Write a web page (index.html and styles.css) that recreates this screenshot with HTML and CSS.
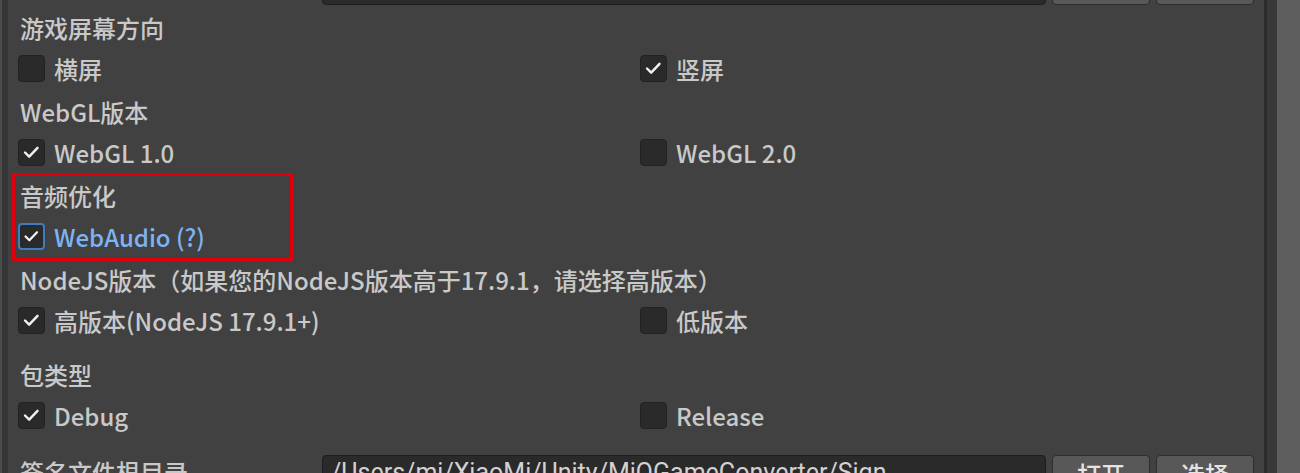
FILE: index.html
```html
<!DOCTYPE html>
<html lang="zh">
<head>
    <meta charset="UTF-8">
    <title>MiQGameConverter</title>
    <link rel="stylesheet" href="styles.css">
</head>
<body>

<div class="edge-left"></div>

<div class="panel">
    <!-- fila anterior, casi fuera de la vista -->
    <div class="field-row prev-row">
        <div class="field-label"></div>
        <div class="path-input"></div>
        <div class="btn"></div>
        <div class="btn"></div>
    </div>

    <div class="section">
        <div class="heading">游戏屏幕方向</div>
        <div class="options">
            <label class="option"><span class="box"></span>横屏</label>
            <label class="option"><span class="box checked"><svg viewBox="0 0 27 27"><polyline points="6.5,13.5 11,18 20,8.5"/></svg></span>竖屏</label>
        </div>
    </div>

    <div class="section">
        <div class="heading">WebGL版本</div>
        <div class="options">
            <label class="option"><span class="box checked"><svg viewBox="0 0 27 27"><polyline points="6.5,13.5 11,18 20,8.5"/></svg></span>WebGL 1.0</label>
            <label class="option"><span class="box"></span>WebGL 2.0</label>
        </div>
    </div>

    <div class="section highlight">
        <div class="heading">音频优化</div>
        <div class="options">
            <label class="option focus"><span class="box checked"><svg viewBox="0 0 27 27"><polyline points="6.5,13.5 11,18 20,8.5"/></svg></span>WebAudio (?)</label>
        </div>
    </div>

    <div class="section">
        <div class="heading">NodeJS版本（如果您的NodeJS版本高于17.9.1，请选择高版本）</div>
        <div class="options">
            <label class="option"><span class="box checked"><svg viewBox="0 0 27 27"><polyline points="6.5,13.5 11,18 20,8.5"/></svg></span>高版本(NodeJS 17.9.1+)</label>
            <label class="option"><span class="box"></span>低版本</label>
        </div>
    </div>

    <div class="section spaced">
        <div class="heading">包类型</div>
        <div class="options">
            <label class="option"><span class="box checked"><svg viewBox="0 0 27 27"><polyline points="6.5,13.5 11,18 20,8.5"/></svg></span>Debug</label>
            <label class="option"><span class="box"></span>Release</label>
        </div>
    </div>

    <div class="field-row">
        <div class="field-label">签名文件根目录</div>
        <div class="path-input">/Users/mi/XiaoMi/Unity/MiQGameConverter/Sign</div>
        <div class="btn">打开</div>
        <div class="btn">选择</div>
    </div>
</div>

<div class="edge-right"></div>
<div class="scrollbar"></div>

</body>
</html>
```

FILE: styles.css
```css
body {
    margin: 0;
    padding: 0;
    height: 473px;
    overflow: hidden;
    display: flex;
    background-color: #414141;
    font-family: "Noto Sans CJK SC", "Noto Sans", sans-serif;
    font-size: 24px;
    font-weight: 500;
    color: #c9c9c9;
}

.edge-left {
    width: 6px;
    border-left: 2px solid #4c4c4c;
    background-color: #353535;
    flex-shrink: 0;
}

.panel {
    flex: 1;
    padding-left: 10px;
    overflow: hidden;
}

.edge-right {
    width: 10px;
    border-left: 3px solid #2c2c2c;
    background-color: #393939;
    flex-shrink: 0;
}

.scrollbar {
    width: 23px;
    background-color: #5e5e5e;
    flex-shrink: 0;
}

/* secciones */
.section {
    width: 1246px;
}

.heading {
    height: 40px;
    line-height: 40px;
    padding-left: 2px;
    white-space: nowrap;
}

.options {
    display: grid;
    grid-template-columns: 622px 1fr;
    height: 40px;
    margin-bottom: 4px;
}

.option {
    display: flex;
    align-items: center;
    gap: 9px;
    white-space: nowrap;
}

.box {
    width: 25px;
    height: 25px;
    border: 1px solid #222;
    border-radius: 4px;
    background-color: #2a2a2a;
    display: flex;
}

.box svg {
    width: 25px;
    height: 25px;
}

.box svg polyline {
    fill: none;
    stroke: #f2f2f2;
    stroke-width: 2.6;
    stroke-linecap: round;
    stroke-linejoin: round;
}

.highlight {
    width: 272px;
    margin-left: -3px;
    padding-left: 3px;
    padding-bottom: 2px;
    margin-bottom: 2px;
    outline: 3px solid #e0000b;
}

.highlight .options {
    margin-bottom: 0;
}

.focus {
    color: #7db3f3;
}

.focus .box {
    width: 23px;
    height: 23px;
    border: 2px solid #3f7cc0;
}

.focus .box svg {
    width: 23px;
    height: 23px;
}

.spaced {
    margin-top: 15px;
}

/* fila de ruta */
.field-row {
    display: flex;
    align-items: flex-start;
    margin-top: 20px;
    height: 32px;
}

.prev-row {
    margin-top: -29px;
    margin-bottom: 5px;
}

.field-label {
    width: 302px;
    line-height: 34px;
    padding-left: 2px;
    white-space: nowrap;
}

.path-input {
    width: 714px;
    height: 32px;
    line-height: 34px;
    padding-left: 8px;
    background-color: #2a2a2a;
    border: 1px solid #1c1c1c;
    border-radius: 4px;
    font-family: Roboto, "Noto Sans", sans-serif;
    font-size: 25px;
    font-weight: 400;
    color: #d2d2d2;
    white-space: nowrap;
    overflow: hidden;
}

.btn {
    width: 96px;
    height: 32px;
    margin-left: 6px;
    line-height: 36px;
    text-align: center;
    background-color: #585858;
    border: 1px solid #2e2e2e;
    border-radius: 4px;
    color: #e4e4e4;
}
```
